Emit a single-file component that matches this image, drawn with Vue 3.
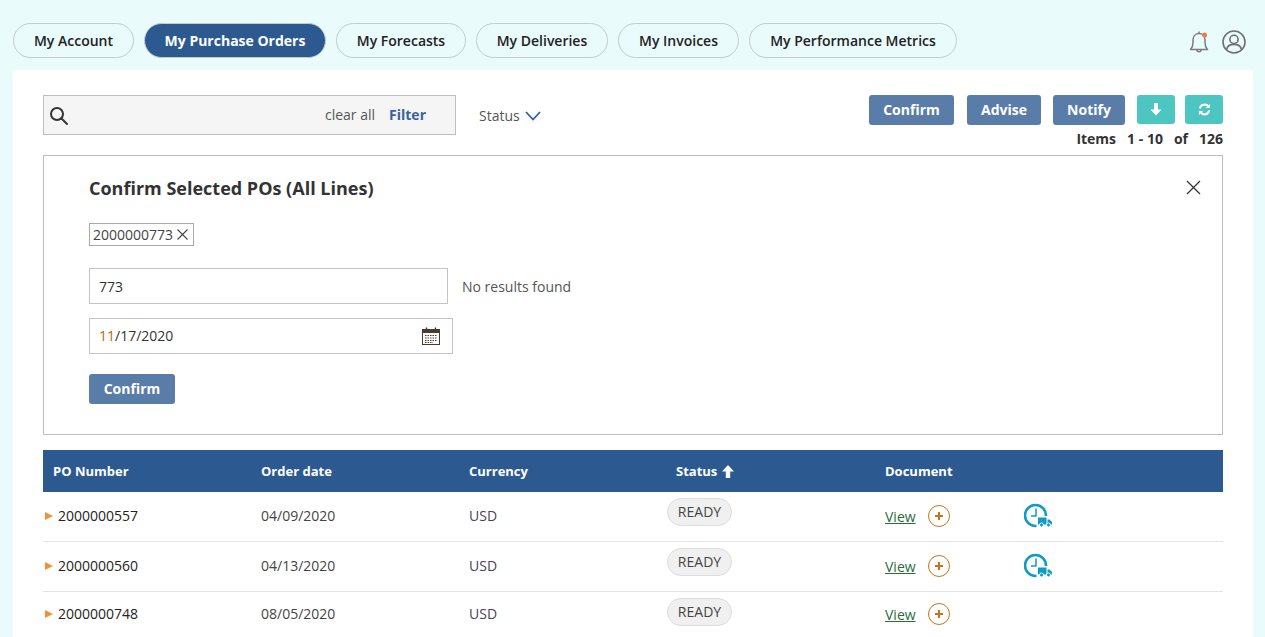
<template>
  <div class="page">
    <nav class="topbar">
      <div class="tabs">
        <a
          v-for="tab in tabs"
          :key="tab.label"
          :class="['tab', { 'is-active': tab.active }]"
          :style="{ width: tab.width + 'px' }"
        >{{ tab.label }}</a>
      </div>
      <div class="top-icons">
        <svg class="bell" width="24" height="26" viewBox="0 0 24 26" fill="none" stroke="#7b7b7b" stroke-width="1.5">
          <path d="M3.5 20.5c1.8-1.8 2.5-3.5 2.5-6.5V11c0-3.6 2.4-6.4 6-6.4s6 2.8 6 6.4v3c0 3 .7 4.7 2.5 6.5z" stroke-linejoin="round" />
          <path d="M12 4.5V2.5" />
          <path d="M9.7 21a2.4 2.4 0 0 0 4.6 0" />
          <circle cx="17.5" cy="6" r="2.5" fill="#ee7d45" stroke="none" />
        </svg>
        <svg width="24" height="24" viewBox="0 0 24 24" fill="none" stroke="#6f6f6f" stroke-width="1.6">
          <circle cx="12" cy="12" r="11" />
          <circle cx="12" cy="9.4" r="4.1" />
          <path d="M4.6 19.6c.5-3.6 3.4-5.2 7.4-5.2s6.900 1.600 7.400 5.200" />
        </svg>
      </div>
    </nav>

    <main class="content">
      <section class="toolbar">
        <div class="search">
          <svg width="20" height="20" viewBox="0 0 20 20" fill="none" stroke="#333" stroke-width="2">
            <circle cx="8" cy="8" r="6" />
            <path d="M12.500 12.500l5.500 5.500" stroke-linecap="round" />
          </svg>
          <span class="clear-all">clear all</span>
          <span class="filter">Filter</span>
        </div>
        <div class="status-filter">
          <span>Status</span>
          <svg width="16" height="10" viewBox="0 0 16 10" fill="none" stroke="#2f5fa8" stroke-width="1.800">
            <path d="M1 1l7 7.500L15 1" />
          </svg>
        </div>
        <div class="toolbar-right">
          <div class="actions">
            <button class="btn btn-confirm">Confirm</button>
            <button class="btn btn-advise">Advise</button>
            <button class="btn btn-notify">Notify</button>
            <button class="btn-teal btn-down">
              <svg width="12" height="13" viewBox="0 0 12 13" fill="#fff">
                <path d="M4 0h4v6.500h3.500L6 12.500.5 6.500H4z" />
              </svg>
            </button>
            <button class="btn-teal">
              <svg width="13" height="13" viewBox="0 0 14 14" fill="none" stroke="#fff" stroke-width="2.200">
                <path d="M2 6a5.200 5.200 0 0 1 9.200-2.200" />
                <path d="M12 8a5.200 5.200 0 0 1-9.200 2.200" />
                <path d="M13 .8v4.700H8.300z" fill="#fff" stroke="none" />
                <path d="M1 13.200V8.500h4.700z" fill="#fff" stroke="none" />
              </svg>
            </button>
          </div>
          <div class="items">
            <span>Items</span><span>1 - 10</span><span>of</span><span>126</span>
          </div>
        </div>
      </section>

      <section class="panel">
        <svg class="panel-close" width="15" height="15" viewBox="0 0 15 15" stroke="#333" stroke-width="1.300">
          <path d="M1 1l13 13M14 1L1 14" />
        </svg>
        <h2 class="panel-title">Confirm Selected POs (All Lines)</h2>
        <div class="chip">
          <span>2000000773</span>
          <svg width="11" height="11" viewBox="0 0 11 11" stroke="#444" stroke-width="1.100">
            <path d="M.5.500l10 10M10.500.500l-10 10" />
          </svg>
        </div>
        <div class="po-row">
          <div class="field field-po">773</div>
          <span class="no-results">No results found</span>
        </div>
        <div class="field field-date">
          <span class="date-text"><span class="month">11</span>/17/2020</span>
          <svg width="18" height="18" viewBox="0 0 18 18" fill="none">
            <rect x=".5" y="2.500" width="17" height="15" fill="#fff" stroke="#4a3a30" />
            <rect x=".5" y="2.500" width="17" height="3.500" fill="#4a3a30" />
            <path d="M4.500 .5v3M13.500 .5v3" stroke="#4a3a30" stroke-width="1.400" />
            <path d="M3 8.500h12M3 11h12M3 13.500h12M3 15.500h8" stroke="#4a3a30" stroke-dasharray="1.500 1" />
          </svg>
        </div>
        <button class="btn btn-submit">Confirm</button>
      </section>

      <section class="orders">
        <div class="orders-head">
          <div class="cell">PO Number</div>
          <div class="cell">Order date</div>
          <div class="cell">Currency</div>
          <div class="cell cell-status-head">
            Status
            <svg width="12" height="13" viewBox="0 0 12 13" fill="#fff">
              <path d="M6 0l6 6.500H8.200V13H3.800V6.500H0z" />
            </svg>
          </div>
          <div class="cell">Document</div>
        </div>
        <div
          v-for="row in rows"
          :key="row.number"
          :class="['orders-row', { 'has-delivery': row.delivery }]"
        >
          <div class="cell cell-number">
            <span class="caret"></span>{{ row.number }}
          </div>
          <div class="cell cell-date">{{ row.date }}</div>
          <div class="cell cell-currency">{{ row.currency }}</div>
          <div class="cell cell-status"><span class="pill">{{ row.status }}</span></div>
          <div class="cell cell-doc">
            <a class="view">View</a>
            <span class="add">
              <svg width="22" height="22" viewBox="0 0 22 22" fill="none" stroke="#c9711c">
                <circle cx="11" cy="11" r="10.500" />
                <path d="M7 11h8M11 7v8" stroke-width="2" />
              </svg>
            </span>
          </div>
          <div class="cell cell-delivery">
            <svg v-if="row.delivery" width="29" height="26" viewBox="0 0 29 26" fill="none">
              <circle cx="11.500" cy="12.500" r="10.500" stroke="#0f9bc5" stroke-width="2.600" />
              <path d="M12 5.500v7.500H7" stroke="#0f9bc5" stroke-width="1.500" />
              <rect x="12.500" y="13" width="16.500" height="13" fill="#fff" />
              <path d="M14 14.500h8.500v7H14zM23.500 16.500h2l2.500 2.500v2.500h-4.500z" fill="#0f9bc5" />
              <circle cx="17.500" cy="22" r="2" fill="#0f9bc5" stroke="#fff" />
              <circle cx="24.500" cy="22" r="2" fill="#0f9bc5" stroke="#fff" />
            </svg>
          </div>
        </div>
      </section>
    </main>
  </div>
</template>

<script setup>
const tabs = [
  { label: 'My Account', width: 121 },
  { label: 'My Purchase Orders', width: 182, active: true },
  { label: 'My Forecasts', width: 130 },
  { label: 'My Deliveries', width: 132 },
  { label: 'My Invoices', width: 121 },
  { label: 'My Performance Metrics', width: 208 },
]

const rows = [
  { number: '2000000557', date: '04/09/2020', currency: 'USD', status: 'READY', delivery: true },
  { number: '2000000560', date: '04/13/2020', currency: 'USD', status: 'READY', delivery: true },
  { number: '2000000748', date: '08/05/2020', currency: 'USD', status: 'READY', delivery: false },
]
</script>

<style>
html,
body {
  margin: 0;
  height: 100%;
  overflow: hidden;
  background: #eafbfc;
}
</style>

<style scoped>
.page {
  height: 100vh;
  padding: 0 12px 0 13px;
  box-sizing: border-box;
  display: flex;
  flex-direction: column;
  font-family: "Open Sans", "Liberation Sans", sans-serif;
  font-size: 14px;
  color: #333;
  overflow: hidden;
}

/* Top navigation */
.topbar {
  display: flex;
  justify-content: space-between;
  align-items: flex-start;
  height: 70px;
  padding-top: 23px;
  box-sizing: border-box;
  flex: none;
}
.tabs {
  display: flex;
  gap: 10px;
}
.tab {
  height: 35px;
  box-sizing: border-box;
  display: flex;
  align-items: center;
  justify-content: center;
  border: 1px solid #c4cccc;
  border-radius: 18px;
  font-weight: 600;
  color: #222;
}
.tab.is-active {
  background: #2c5a90;
  color: #fff;
  font-weight: 700;
}
.top-icons {
  display: flex;
  align-items: center;
  gap: 11px;
  margin-right: 7px;
  margin-top: 6px;
}

/* Toolbar */
.content {
  flex: 1;
  background: #fff;
  padding: 25px 30px 0;
}
.toolbar {
  display: flex;
  align-items: flex-start;
  height: 60px;
}
.search {
  width: 413px;
  height: 40px;
  box-sizing: border-box;
  display: flex;
  align-items: center;
  background: #f5f5f5;
  border: 1px solid #bdbdbd;
  padding: 0 29px 0 5px;
}
.search svg {
  margin-top: 2px;
}
.clear-all {
  margin-left: auto;
  padding-bottom: 2px;
  color: #555;
}
.filter {
  margin-left: 14px;
  padding-bottom: 2px;
  font-weight: 700;
  color: #3c619f;
}
.status-filter {
  display: flex;
  align-items: center;
  gap: 5px;
  height: 40px;
  margin-left: 23px;
  color: #555;
}
.status-filter svg {
  margin-top: 2px;
}
.toolbar-right {
  margin-left: auto;
}
.actions {
  display: flex;
  justify-content: flex-end;
  align-items: flex-start;
}
.btn {
  height: 30px;
  padding: 0 0 2px;
  border: none;
  border-radius: 3px;
  background: #5a7ca8;
  color: #fff;
  font-family: inherit;
  font-size: 14px;
  font-weight: 700;
}
.btn-confirm {
  width: 85px;
}
.btn-advise {
  width: 74px;
  margin-left: 13px;
}
.btn-notify {
  width: 72px;
  margin-left: 12px;
}
.btn-teal {
  width: 38px;
  height: 29px;
  padding: 0;
  margin-left: 10px;
  border: none;
  border-radius: 3px;
  background: #4dc5c1;
  display: flex;
  align-items: center;
  justify-content: center;
}
.btn-down {
  margin-left: 12px;
}
.items {
  display: flex;
  justify-content: flex-end;
  gap: 11px;
  margin-top: 4px;
  line-height: 20px;
  font-weight: 700;
  color: #333;
}

/* Confirm panel */
.panel {
  position: relative;
  height: 280px;
  box-sizing: border-box;
  border: 1px solid #bdbdbd;
  padding: 20px 45px 0;
  display: flex;
  flex-direction: column;
  align-items: flex-start;
}
.panel-close {
  position: absolute;
  top: 24px;
  right: 21px;
}
.panel-title {
  margin: 0;
  font-size: 18px;
  line-height: 24px;
  font-weight: 700;
  color: #333;
}
.chip {
  display: flex;
  align-items: center;
  gap: 4px;
  width: 105px;
  height: 23px;
  box-sizing: border-box;
  margin-top: 23px;
  padding: 0 3px 1px;
  border: 1px solid #a9a9a9;
  color: #444;
}
.po-row {
  display: flex;
  align-items: center;
  margin-top: 22px;
}
.field {
  height: 36px;
  box-sizing: border-box;
  display: flex;
  align-items: center;
  justify-content: space-between;
  border: 1px solid #c4c4c4;
  padding: 0 12px 0 9px;
  color: #333;
}
.field-po {
  width: 359px;
}
.no-results {
  margin-left: 14px;
  color: #555;
}
.field-date {
  width: 364px;
  margin-top: 14px;
}
.date-text {
  padding-bottom: 2px;
}
.month {
  color: #b8690f;
}
.btn-submit {
  width: 86px;
  margin-top: 20px;
}

/* Orders table */
.orders {
  margin-top: 15px;
}
.orders-head,
.orders-row {
  display: grid;
  grid-template-columns: 208px 208px 208px 208px 139px 1fr;
  align-items: center;
}
.orders-head {
  height: 42px;
  background: #2c5a90;
  color: #fff;
  font-size: 13px;
  font-weight: 700;
}
.orders-row {
  height: 45px;
  border-bottom: 1px solid #e4e4e4;
}
.orders-row.has-delivery {
  height: 49px;
}
.cell {
  padding: 0 10px;
}
.cell-status-head {
  display: flex;
  align-items: center;
  gap: 5px;
  padding-left: 9px;
}
.cell-number {
  display: flex;
  align-items: center;
  gap: 5px;
  padding-left: 2px;
  padding-bottom: 2px;
  color: #222;
}
.caret {
  width: 0;
  height: 0;
  border-left: 8px solid #f0923a;
  border-top: 4px solid transparent;
  border-bottom: 4px solid transparent;
}
.cell-date {
  padding-bottom: 2px;
  color: #444;
}
.cell-currency {
  padding-bottom: 2px;
  color: #4b4060;
}
.cell-status {
  align-self: flex-start;
  padding: 6px 0 0;
}
.pill {
  display: inline-flex;
  align-items: center;
  justify-content: center;
  width: 65px;
  height: 28px;
  padding-bottom: 2px;
  box-sizing: border-box;
  border: 1px solid #dcdcdc;
  border-radius: 15px;
  background: #f0f0f0;
  color: #444;
}
.cell-doc {
  display: flex;
  align-items: center;
}
.view {
  color: #2a6b3c;
  text-decoration: underline;
}
.add {
  display: flex;
  margin-left: 12px;
  margin-top: -2px;
}
.cell-delivery {
  display: flex;
  height: 26px;
  margin-top: -2px;
}
</style>
